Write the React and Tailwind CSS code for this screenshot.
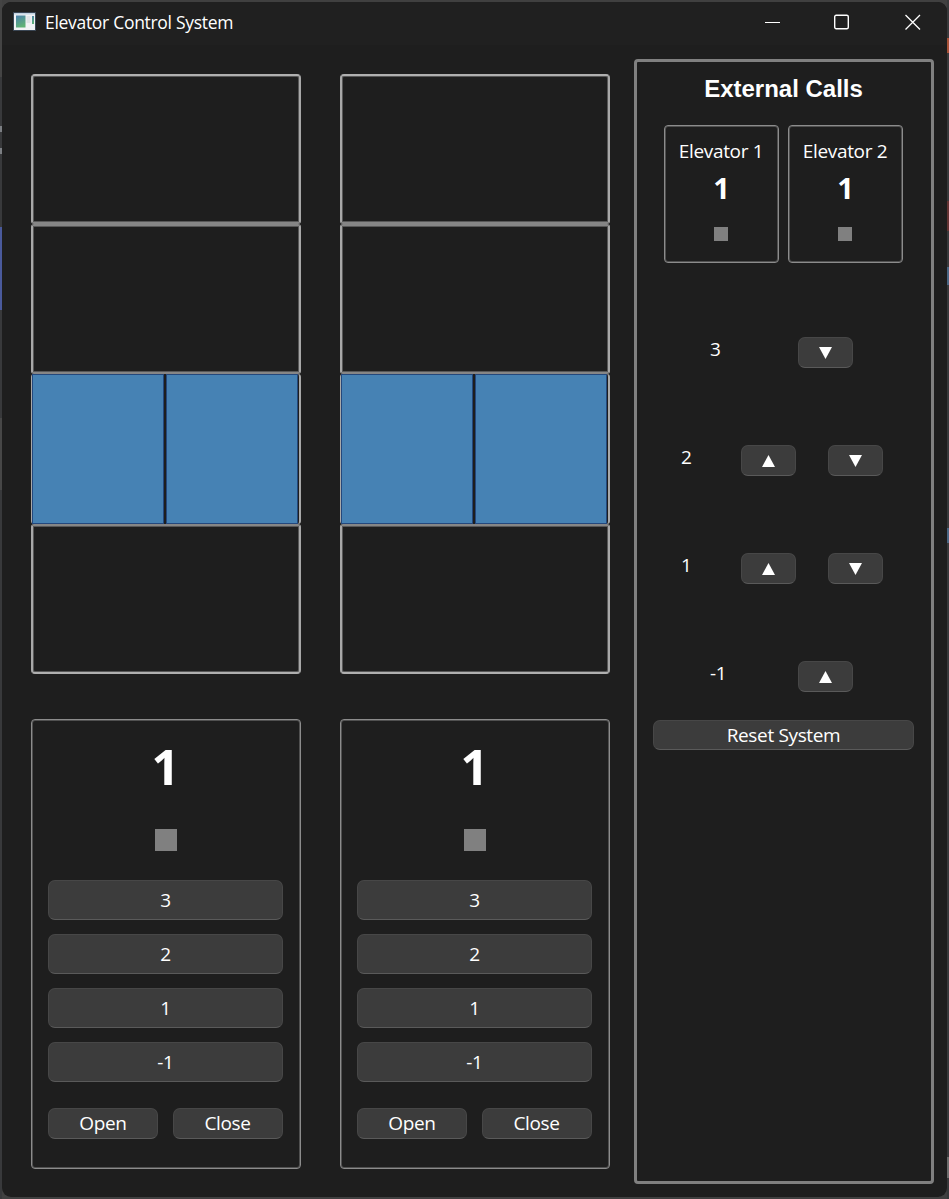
const ui = "font-['Open_Sans','Noto_Sans',sans-serif]";

function Btn({ className, children }) {
  return (
    <button
      className={
        "flex items-center justify-center rounded-[7px] border-[1.5px] border-[#474747] border-b-[#5a5a5a] bg-[#3c3c3c] text-white " +
        className
      }
    >
      {children}
    </button>
  );
}

function Label({ children, className = "" }) {
  return <span className={"block whitespace-nowrap text-[19px] leading-[26px] tracking-[-0.35px] " + className}>{children}</span>;
}

function Shaft() {
  return (
    <div className="flex h-[600px] w-[270px] flex-col">
      {["3", "2", "1", "-1"].map((f) => (
        <div
          key={f}
          className={
            "h-[150px] rounded-[3px] " +
            (f === "1"
              ? "flex justify-between border-l border-r-2 border-l-[#a8a8a8] border-r-[#a8a8a8] pr-[1px]"
              : "border-2 border-x-[#a8a8a8] border-y-[#868686] first:rounded-t-[4px] first:border-t-[#b0b0b0] last:rounded-b-[4px] last:border-b-[#b0b0b0] shadow-[inset_0_0_0_1px_#585858]")
          }
        >
          {f === "1" && (
            <>
              <div className="h-[150px] w-[132px] border border-[#24487c] bg-[#4682b4]" />
              <div className="h-[150px] w-[132px] border border-[#24487c] bg-[#4682b4]" />
            </>
          )}
        </div>
      ))}
    </div>
  );
}

function Cabin() {
  return (
    <div className="mt-[45px] flex h-[450px] w-[270px] flex-col items-center rounded-[4px] border border-[#8c8c8c] pr-[17px] pl-[15px] shadow-[inset_0_0_0_1px_#505050]">
      <div className="mt-[18px] h-[56px] pl-px font-['Open_Sans',sans-serif] text-[49px] leading-[56px] font-bold">1</div>
      <div className="mt-[35px] ml-px h-[22px] w-[22px] bg-[#808080]" />
      <div className="mt-[29px] flex w-[235px] flex-col gap-[14px]">
        {["3", "2", "1", "-1"].map((f) => (
          <Btn key={f} className="h-10">
            <Label className="pl-px">{f}</Label>
          </Btn>
        ))}
      </div>
      <div className="mt-[26px] flex w-[235px] justify-between">
        <Btn className="h-[31px] w-[110px]"><Label className="-mt-0.5 pl-px">Open</Label></Btn>
        <Btn className="h-[31px] w-[110px]"><Label className="-mt-0.5">Close</Label></Btn>
      </div>
    </div>
  );
}

function Arrow({ up }) {
  return (
    <Btn className="h-[31px] w-[55px]">
      <svg width="13" height="12" viewBox="0 0 13 12" className="mt-px">
        <path d={up ? "M6.5 0 L13 12 H0 Z" : "M0 0 H13 L6.5 12 Z"} fill="#fff" />
      </svg>
    </Btn>
  );
}

function Status({ n }) {
  return (
    <div className="flex h-[138px] w-[115px] flex-col items-center rounded-[4px] border border-[#8c8c8c] pt-[12px] shadow-[inset_0_0_0_1px_#505050]">
      <Label className="-ml-px">Elevator {n}</Label>
      <div className="mt-[7px] h-[34px] font-['Open_Sans',sans-serif] text-[29px] leading-[34px] font-bold">1</div>
      <div className="mt-[22px] mr-px h-[14px] w-[14px] bg-[#808080]" />
    </div>
  );
}

function CallRow({ floor, up, down }) {
  const single = !(up && down);
  return (
    <div className={"flex h-[31px] items-start " + (single ? "pl-[73px]" : "pl-[44px]")}>
      <Label className={"-mt-px " + (single ? "w-[88px]" : "w-[60px]")}>{floor}</Label>
      <div className="flex gap-8">
        {up && <Arrow up />}
        {down && <Arrow />}
      </div>
    </div>
  );
}

export default function App() {
  return (
    <div className={"flex h-[1199px] w-[949px] overflow-hidden bg-[#404040] text-white " + ui}>
      <div className="flex w-[2px] shrink-0 flex-col bg-[#38393b]">
        <div className="h-[77px] bg-[#444444]" />
        <div className="mt-[49px] h-[6px] bg-[#7c7f83]" />
        <div className="mt-[16px] h-[6px] bg-[#7c7f83]" />
        <div className="mt-[73px] h-[83px] bg-[#4a5a9c]" />
        <div className="mt-[108px] h-[72px] bg-[#474747]" />
      </div>
      <div className="mt-[2px] flex h-[1195px] w-[945px] shrink-0 flex-col overflow-hidden rounded-[9px] bg-[#1e1e1e]">
        <header className="flex h-[43px] shrink-0 items-center bg-[#202020] pb-[3px] pl-[11px]">
          <svg width="23" height="19" viewBox="0 0 23 19" className="-mt-px">
            <defs>
              <linearGradient id="pane" x1="0" y1="0" x2="0.4" y2="1">
                <stop offset="0" stopColor="#4a7fae" />
                <stop offset="1" stopColor="#5fb276" />
              </linearGradient>
            </defs>
            <rect x="0.5" y="0.5" width="22" height="18" fill="#f1f3f5" stroke="#3a4654" />
            <rect x="1" y="1" width="21" height="1.5" fill="#c3d3e2" />
            <rect x="3" y="3.5" width="9.500" height="12" fill="url(#pane)" />
            <rect x="13.500" y="4" width="4" height="7" fill="#dfe3e6" />
            <rect x="19" y="4" width="2" height="8" fill="url(#pane)" />
          </svg>
          <span className="ml-[9px] text-[17.5px] leading-6 tracking-[-0.3px] whitespace-nowrap">Elevator Control System</span>
          <div className="ml-auto flex items-center pr-[26px]">
            <svg width="16" height="16" viewBox="0 0 16 16"><path d="M0 8.500 H15" stroke="#fff" /></svg>
            <svg width="16" height="16" viewBox="0 0 16 16" className="ml-[53px]"><rect x="0.700" y="1.200" width="13.600" height="13.600" rx="1.500" fill="none" stroke="#fff" strokeWidth="1.400" /></svg>
            <svg width="16" height="16" viewBox="0 0 16 16" className="ml-[55px]"><path d="M0.500 1 L15 15.500 M15 1 L0.500 15.500" stroke="#fff" strokeWidth="1.300" /></svg>
          </div>
        </header>
        <main className="flex grow pl-[29px]">
          <section className="mr-[39px] mt-[29px]"><Shaft /><Cabin /></section>
          <section className="mr-[24px] mt-[29px]"><Shaft /><Cabin /></section>
          <aside className="mt-[14px] h-[1125px] w-[300px] rounded-[4px] border-[3px] border-[#808080]">
            <h1 className="mt-[13px] pr-px text-center font-['Liberation_Sans',sans-serif] text-[24px] leading-[28px] font-bold">External Calls</h1>
            <div className="mt-[22px] flex gap-[9px] pl-[27px]">
              <Status n={1} />
              <Status n={2} />
            </div>
            <div className="mt-[74px] flex flex-col gap-[77px]">
              <CallRow floor="3" down />
              <CallRow floor="2" up down />
              <CallRow floor="1" up down />
              <CallRow floor="-1" up />
            </div>
            <Btn className="mt-[28px] ml-[16px] h-[30px] w-[261px]"><Label>Reset System</Label></Btn>
          </aside>
        </main>
      </div>
      <div className="flex w-[2px] shrink-0 flex-col bg-[#38393b]">
        <div className="mt-[38px] h-[15px] bg-[#a85238]" />
        <div className="mt-[148px] h-[30px] bg-[#643434]" />
        <div className="mt-[36px] h-[18px] bg-[#4a6684]" />
        <div className="mt-[243px] h-[15px] bg-[#4a6684]" />
        <div className="mt-[614px] h-[21px] bg-[#6c6c6c]" />
      </div>
    </div>
  );
}
